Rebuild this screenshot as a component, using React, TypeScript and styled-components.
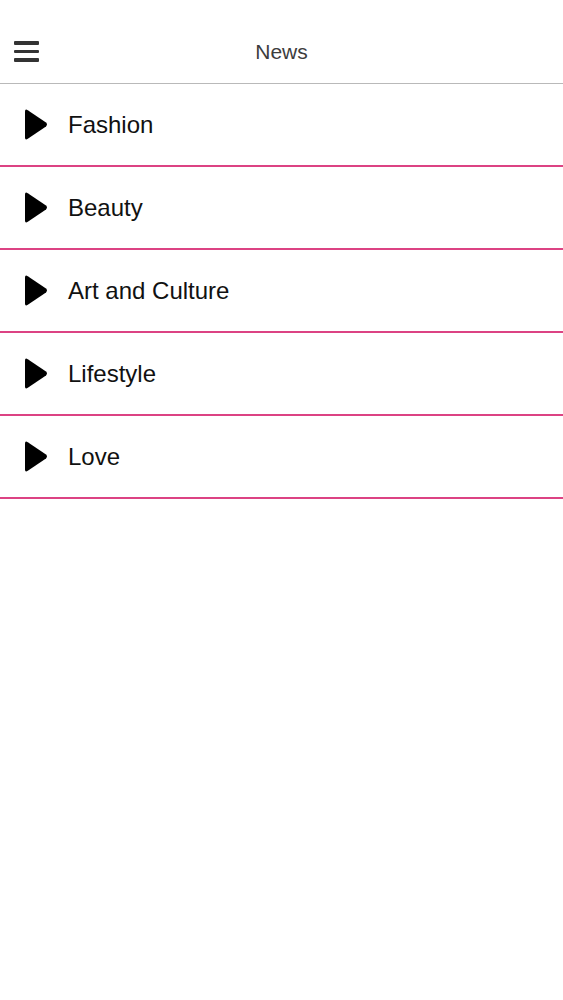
import React from "react";
import styled, { createGlobalStyle } from "styled-components";

const GlobalStyle = createGlobalStyle`
  html, body {
    margin: 0;
    padding: 0;
    background: #ffffff;
    font-family: "Liberation Sans", Arial, sans-serif;
  }
`;

const Page = styled.div`
  width: 563px;
  min-height: 1000px;
  background: #fff;
`;

const Header = styled.header`
  height: 84px;
  border-bottom: 1px solid #b9b9b9;
  display: grid;
  grid-template-columns: 60px 1fr 60px;
  align-items: center;
  padding-top: 20px;
  box-sizing: border-box;
`;

const MenuButton = styled.button`
  border: 0;
  background: none;
  padding: 0 0 0 14px;
  display: flex;
  flex-direction: column;
  gap: 5px;
  width: 40px;
  cursor: pointer;
`;

const MenuBar = styled.span`
  display: block;
  width: 25px;
  height: 3.5px;
  border-radius: 1px;
  background: #333;
`;

const Title = styled.h1`
  margin: 0;
  text-align: center;
  font-size: 21px;
  font-weight: normal;
  color: #3d3d3d;
`;

const List = styled.ul`
  list-style: none;
  margin: 0;
  padding: 0;
`;

const Row = styled.li`
  height: 81px;
  border-bottom: 2px solid #dc4383;
  display: flex;
  align-items: center;
  padding-left: 24px;
  gap: 20px;
`;

const Label = styled.span`
  font-size: 24px;
  color: #111;
  padding-top: 1px;
`;

const Arrow = () => (
  <svg width="24" height="33" viewBox="0 0 24 33">
    <path
      d="M1 3.5 Q1 0.5 3.8 2.2 L22 14.6 Q24 16.5 22 18.4 L3.8 30.8 Q1 32.5 1 29.5 Z"
      fill="#000"
    />
  </svg>
);

const sections = ["Fashion", "Beauty", "Art and Culture", "Lifestyle", "Love"];

export default function App() {
  return (
    <Page>
      <GlobalStyle />
      <Header>
        <MenuButton aria-label="menu">
          <MenuBar />
          <MenuBar />
          <MenuBar />
        </MenuButton>
        <Title>News</Title>
        <span />
      </Header>
      <List>
        {sections.map((s) => (
          <Row key={s}>
            <Arrow />
            <Label>{s}</Label>
          </Row>
        ))}
      </List>
    </Page>
  );
}
